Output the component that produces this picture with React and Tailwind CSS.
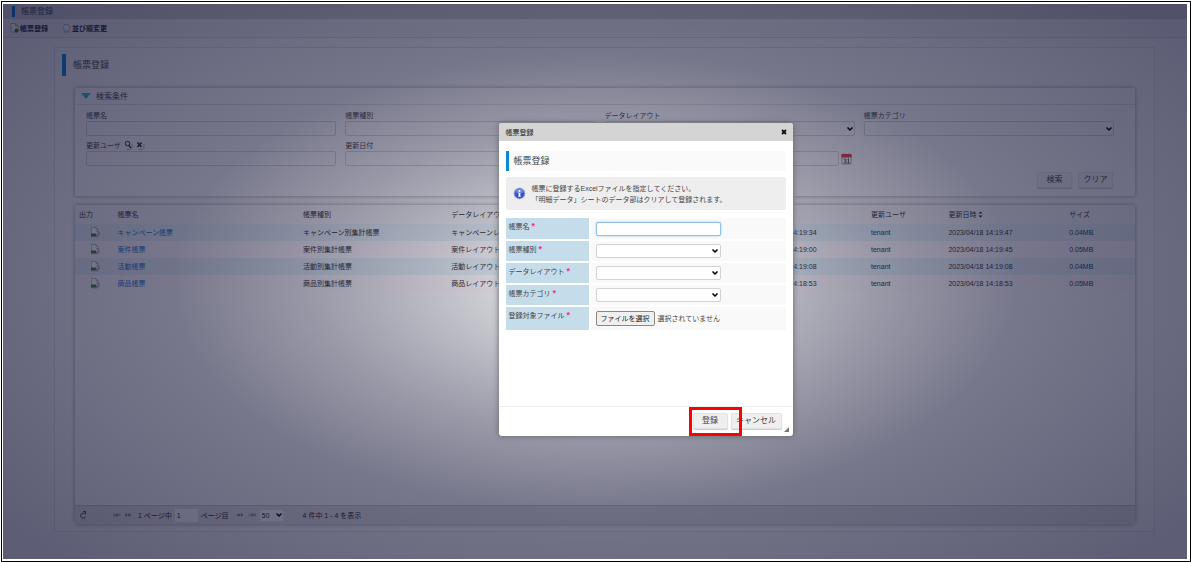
import React, { useState } from 'react';
import { ChevronDown } from 'lucide-react';

const ROWS = [
  { name: 'キャンペーン帳票', type: 'キャンペーン別集計帳票', layout: 'キャンペーンレイアウト', created: '2023/04/18 14:19:34', updated: '2023/04/18 14:19:47', size: '0.04MB' },
  { name: '案件帳票',         type: '案件別集計帳票',         layout: '案件レイアウト',         created: '2023/04/18 14:19:00', updated: '2023/04/18 14:19:45', size: '0.05MB' },
  { name: '活動帳票',         type: '活動別集計帳票',         layout: '活動レイアウト',         created: '2023/04/18 14:19:08', updated: '2023/04/18 14:19:08', size: '0.04MB' },
  { name: '商品帳票',         type: '商品別集計帳票',         layout: '商品レイアウト',         created: '2023/04/18 14:18:53', updated: '2023/04/18 14:18:53', size: '0.05MB' },
];

const DIALOG_SELECTS = [
  { id: 'reg-type',     label: '帳票種別' },
  { id: 'reg-layout',   label: 'データレイアウト' },
  { id: 'reg-category', label: '帳票カテゴリ' },
];

// ── Small drawings ───────────────────────────────────────────────────────────
function AddFileIcon() {
  return (
    <svg className="w-[9px] h-[10px] shrink-0" viewBox="0 0 18 20" fill="none">
      <path d="M2 1h9l5 5v12H2z" fill="#fff" stroke="#999" strokeWidth="1.5" />
      <path d="M11 1v5h5" stroke="#999" strokeWidth="1.5" />
      <circle cx="13" cy="15" r="4" fill="#0f8a24" />
    </svg>
  );
}

function SortIcon() {
  return (
    <svg className="w-[9px] h-[10px] shrink-0" viewBox="0 0 18 20" fill="none" stroke="#a5a5a5" strokeWidth="1.5">
      <path d="M5 3h8l3 7-3 6H5l-3-6z" fill="#f4f4f4" />
      <path d="M4 18h13" stroke="#999" />
    </svg>
  );
}

function ExportIcon() {
  return (
    <svg className="w-[10px] h-[11px]" viewBox="0 0 20 22" fill="none">
      <path d="M3 1h9l4 4v15H3z" fill="#fff" stroke="#aaa" strokeWidth="1.4" />
      <path d="M12 1v4h4" stroke="#999" strokeWidth="1.4" />
      <path d="M2 13h11v6H2z" fill="#3d7a38" />
      <path d="M13 9c5 0 6 3 5 7l-5 3" stroke="#888" strokeWidth="1.6" />
    </svg>
  );
}

function CalendarIcon() {
  return (
    <svg className="w-[11px] h-[12px]" viewBox="0 0 22 24">
      <rect x="2" y="3" width="18" height="19" fill="#fff" stroke="#888" strokeWidth="1.5" />
      <rect x="1" y="2" width="20" height="7" fill="#e8323a" />
      <path d="M6 0v4M16 0v4" stroke="#999" strokeWidth="2" />
      <path d="M5 12h5v8H5M6 16h4M15 11v9M13 13l2-1M12 20h6" fill="none" stroke="#555" strokeWidth="1.8" />
    </svg>
  );
}

function InfoIcon() {
  return (
    <svg className="w-[13px] h-[13px] shrink-0" viewBox="0 0 26 26">
      <circle cx="13" cy="13" r="12" fill="#b4bde0" />
      <circle cx="13" cy="13" r="10" fill="#3551c9" />
      <path d="M5 11a8 8 0 0 1 16 0q-8 3-16 0" fill="#6d84e0" />
      <circle cx="13" cy="8" r="2" fill="#fff" />
      <path d="M13 12v7" stroke="#fff" strokeWidth="3.5" fill="none" />
      <path d="M10.5 12h2M10.500 19h5" stroke="#fff" strokeWidth="1.2" />
    </svg>
  );
}

function SearchIcon() {
  return (
    <svg className="w-[9px] h-[10px]" viewBox="0 0 18 20" fill="none">
      <path d="M16 8v8l-3 3H5" stroke="#999" strokeWidth="1.4" />
      <circle cx="7" cy="7" r="4.5" stroke="#222" strokeWidth="2" />
      <path d="M10 11l4 5" stroke="#222" strokeWidth="2.5" />
    </svg>
  );
}

function ClearIcon() {
  return (
    <svg className="w-[9px] h-[10px]" viewBox="0 0 18 20" fill="none">
      <path d="M16 8v8l-3 3H5" stroke="#999" strokeWidth="1.4" />
      <path d="M3 5l8 9M11 5l-8 9" stroke="#222" strokeWidth="3" />
    </svg>
  );
}

// arrow with a bar in front (first) or doubled head (prev)
function PageArrow({ flip, bar }) {
  return (
    <svg className={`w-[8px] h-[6px] ${flip ? 'rotate-180' : ''}`} viewBox="0 0 16 12" fill="none" stroke="#777" strokeWidth="2">
      {bar ? <path d="M2 3v6M9 3L5 6l4 3M5 6h10" /> : <path d="M6 3L2 6l4 3M12 3L8 6l4 3M2 6h13" />}
    </svg>
  );
}

function Select({ id, dialog }) {
  return (
    <div className={`grid items-center ${dialog ? 'w-[125px]' : 'w-full'}`}>
      <select id={id} className={`col-start-1 row-start-1 w-full appearance-none rounded-xs border outline-none px-1 ${dialog ? 'h-[14px] border-[#d2d2d2] bg-white' : 'h-[15px] border-[#d2d2d6] bg-transparent'}`}>
        <option></option>
      </select>
      <ChevronDown className={`col-start-1 row-start-1 justify-self-end w-[8px] h-[8px] pointer-events-none text-black ${dialog ? 'mr-[2px]' : 'mr-[1px]'}`} strokeWidth={5} />
    </div>
  );
}

function TextField({ id, label, icons, calendar, ariaLabel }) {
  return (
    <div className="min-w-0">
      <div className="flex items-center gap-[2px] h-[12px]">
        {label && <label htmlFor={id}>{label}</label>}
        {icons}
      </div>
      <div className="flex items-center gap-[2px]">
        <input id={id} type="text" aria-label={ariaLabel} className="flex-1 min-w-0 h-[15px] px-1 rounded-xs border border-[#d2d2d6] outline-none" />
        {calendar && <button type="button" aria-label="カレンダー" className="w-[14px]"><CalendarIcon /></button>}
      </div>
    </div>
  );
}

function GrayButton({ children, wide, onClick }) {
  return (
    <button type="button" onClick={onClick}
      className={`${wide ? 'w-[51px]' : 'w-[35px]'} h-[16px] text-[8px] leading-[14px] rounded-xs border border-[#e2e2e2] bg-[#efefef] text-[#444] shadow-[0_1px_1px_#ccc]`}>
      {children}
    </button>
  );
}

function SearchPanel() {
  return (
    <section className="bg-[#f7f7f7] rounded-xs shadow-[0_0_4px_#999]">
      <h2 className="flex items-center gap-[5px] h-[17px] px-[6px] border-b border-[#dedede] text-[8px]">
        <svg className="w-[10px] h-[6px]" viewBox="0 0 10 6"><path d="M0 0h10L5 6z" fill="#2cb8cc" /></svg>
        検索条件
      </h2>
      <div className="grid grid-cols-4 gap-x-[9px] gap-y-[3px] pl-[11px] pr-[21px] pt-[4px]">
        <TextField id="s-name" label="帳票名" />
        <TextField id="s-type" label="帳票種別" />
        <div>
          <label htmlFor="s-layout" className="flex items-center h-[12px]">データレイアウト</label>
          <Select id="s-layout" />
        </div>
        <div>
          <label htmlFor="s-category" className="flex items-center h-[12px]">帳票カテゴリ</label>
          <Select id="s-category" />
        </div>
        <TextField id="s-user" label="更新ユーザ" icons={
          <>
            <button type="button" aria-label="検索" className="ml-[1px]"><SearchIcon /></button>
            <button type="button" aria-label="クリア" className="ml-[1px]"><ClearIcon /></button>
          </>
        } />
        <TextField id="s-from" label="更新日付" calendar />
        <TextField id="s-to" ariaLabel="更新日付 終了" calendar />
      </div>
      <div className="flex justify-end gap-[6px] pt-[6px] pr-[22px] pb-[8px]">
        <GrayButton>検索</GrayButton>
        <GrayButton>クリア</GrayButton>
      </div>
    </section>
  );
}

function ReportTable() {
  return (
    <table className="w-full table-fixed border-collapse text-left">
      <colgroup>
        <col className="w-[4%]" />
        <col className="w-[17.500%]" />
        <col className="w-[14%]" />
        <col className="w-[28.400%]" />
        <col className="w-[11.200%]" />
        <col className="w-[7.300%]" />
        <col className="w-[11.400%]" />
        <col />
      </colgroup>
      <thead>
        <tr className="h-[19px] bg-[#f1f1f1] text-[#333]">
          <th className="font-normal pl-[4px]">出力</th>
          <th className="font-normal">帳票名</th>
          <th className="font-normal">帳票種別</th>
          <th className="font-normal">データレイアウト</th>
          <th className="font-normal">登録日時</th>
          <th className="font-normal">更新ユーザ</th>
          <th className="font-normal">
            <span className="flex items-center gap-[2px]">
              更新日時
              <svg className="w-[5px] h-[7px]" viewBox="0 0 10 14"><path d="M1 5l4-4 4 4zM1 9h8l-4 4z" fill="#222" /></svg>
            </span>
          </th>
          <th className="font-normal">サイズ</th>
        </tr>
      </thead>
      <tbody>
        {ROWS.map(row => (
          <tr key={row.name} className="h-[17px] odd:bg-[#e2edf1] even:bg-[#f9f4f5] text-[#333] whitespace-nowrap">
            <td className="pl-[15px]"><ExportIcon /></td>
            <td><a href="#" className="text-[#1a73c8]">{row.name}</a></td>
            <td>{row.type}</td>
            <td>{row.layout}</td>
            <td>{row.created}</td>
            <td>tenant</td>
            <td>{row.updated}</td>
            <td>{row.size}</td>
          </tr>
        ))}
      </tbody>
    </table>
  );
}

function Pager() {
  return (
    <footer className="flex items-center h-[19px] px-[5px] bg-[#e0e0e0] border-t border-[#c8c8c8] text-[#222]">
      <button type="button" aria-label="再読込" className="w-[8px]">
        <svg className="w-[7px] h-[8px]" viewBox="0 0 14 16" fill="none" stroke="#333" strokeWidth="1.8"><path d="M10 6a5 5 0 1 0 1 5M6 1h5v5" /></svg>
      </button>
      <div className="flex items-center gap-[3px] ml-[25px]">
        <button type="button" aria-label="最初のページ"><PageArrow bar /></button>
        <button type="button" aria-label="前のページ"><PageArrow /></button>
      </div>
      <label htmlFor="page" className="ml-[6px]">1 ページ中</label>
      <input id="page" type="text" defaultValue="1" className="w-[23px] h-[13px] mx-[3px] px-[2px] bg-[#fafafa] outline-none" />
      <span>ページ目</span>
      <div className="flex items-center gap-[4px] ml-[7px]">
        <button type="button" aria-label="次のページ"><PageArrow flip /></button>
        <button type="button" aria-label="最後のページ"><PageArrow flip bar /></button>
      </div>
      <div className="grid items-center w-[23px] ml-[4px]">
        <select aria-label="表示件数" defaultValue="50" className="col-start-1 row-start-1 appearance-none h-[11px] px-[2px] bg-[#fafafa] outline-none">
          <option>50</option>
          <option>100</option>
        </select>
        <ChevronDown className="col-start-1 row-start-1 justify-self-end w-[8px] h-[8px] pointer-events-none text-black" strokeWidth={5} />
      </div>
      <span className="ml-[20px]">4 件中 1 - 4 を表示</span>
    </footer>
  );
}

function FormRow({ id, label, children }) {
  return (
    <tr className="h-[22px] border-b-2 border-white last:border-b-0">
      <th className="w-[84px] bg-[#c5dcea] font-normal text-left align-top pl-[3px] pt-[3px] border-r-2 border-white">
        <label htmlFor={id}>{label} <span className="font-bold text-[9px] leading-[9px] text-[#f0308c]">*</span></label>
      </th>
      <td className="bg-[#f9f9f9] pl-[5px]">{children}</td>
    </tr>
  );
}

function RegisterDialog({ onClose }) {
  const [fileName, setFileName] = useState('');

  return (
    <div role="dialog" aria-label="帳票登録" className="relative flex flex-col w-[294px] h-[313px] bg-white rounded-[3px] shadow-[0_0_6px_#666] overflow-hidden text-[#444]">
      <div className="flex items-center justify-between h-[18px] pl-[7px] pr-[6px] bg-[#d4d4d4] text-[#222]">
        <span>帳票登録</span>
        <button type="button" aria-label="閉じる" onClick={onClose}>
          <svg className="w-[6px] h-[6px]" viewBox="0 0 6 6"><path d="M1 1l4 4M5 1L1 5" stroke="#111" strokeWidth="1.8" /></svg>
        </button>
      </div>
      <div className="flex-1 px-[7px] pt-[10px]">
        <h2 className="h-[20px] pl-[5px] border-l-3 border-[#0d8bd0] bg-[#fafafa] text-[9px] leading-[20px]">帳票登録</h2>
        <div className="flex items-center gap-[6px] h-[33px] mt-[6px] px-[7px] rounded-xs bg-[#eeeeee]">
          <InfoIcon />
          <p>帳票に登録するExcelファイルを指定してください。<br />「明細データ」シートのデータ部はクリアして登録されます。</p>
        </div>
        <table className="w-full mt-[8px] border-collapse">
          <tbody>
            <FormRow id="reg-name" label="帳票名">
              <input id="reg-name" type="text" autoFocus className="block w-[125px] h-[14px] px-[2px] rounded-xs border border-[#8fc2ea] bg-white outline-none shadow-[0_0_2px_#8cc4f0]" />
            </FormRow>
            {DIALOG_SELECTS.map(f => (
              <FormRow key={f.id} id={f.id} label={f.label}>
                <Select id={f.id} dialog />
              </FormRow>
            ))}
            <FormRow id="reg-file" label="登録対象ファイル">
              <div className="flex items-center gap-[3px] h-[23px]">
                <input id="reg-file" type="file" className="sr-only" onChange={e => setFileName(e.target.files[0]?.name || '')} />
                <label htmlFor="reg-file" className="h-[15px] leading-[13px] px-[4px] border border-[#888] rounded-xs bg-[#efefef] text-[#222]">ファイルを選択</label>
                <span>{fileName || '選択されていません'}</span>
              </div>
            </FormRow>
          </tbody>
        </table>
      </div>
      <div className="flex justify-end gap-[3px] h-[30px] pt-[6px] pr-[11px] border-t border-[#ececec]">
        <GrayButton>登録</GrayButton>
        <GrayButton wide onClick={onClose}>キャンセル</GrayButton>
      </div>
      {/* highlight frame over the register button */}
      <div className="absolute right-[51px] bottom-0 w-[53px] h-[29px] border-3 border-[#ff0000] pointer-events-none" />
      <svg className="absolute right-[4px] bottom-[4px] w-[5px] h-[5px]" viewBox="0 0 5 5"><path d="M5 0v5H0z" fill="#777" /></svg>
    </div>
  );
}

export default function App() {
  const [open, setOpen] = useState(true);

  return (
    <div className="flex min-h-screen pl-px pt-px bg-white text-[7px] leading-[11px] text-[#444] font-['Liberation_Sans','Noto_Sans_CJK_JP',sans-serif]">
      <div className="flex flex-1 border border-black pl-px pt-[2px] pr-[3px] pb-[2px]">
        <div className="relative flex flex-col flex-1 min-w-0 bg-[#f2f2f2]">
          <header className="flex items-center h-[15px] px-[9px] bg-[#cccccc]">
            <h1 className="pl-[6px] border-l-3 border-[#0070c8] text-[8px]">帳票登録</h1>
          </header>
          <nav className="flex items-center gap-[14px] h-[19px] px-[7px] bg-[#ececec] border-b border-[#d8d8d8] font-bold text-[#222]">
            <button type="button" className="flex items-center gap-px"><AddFileIcon />帳票登録</button>
            <button type="button" className="flex items-center gap-px"><SortIcon />並び順変更</button>
          </nav>
          <main className="flex flex-col flex-1 pl-[51px] pt-[9px] pb-[27px] pr-[32px]">
            <div className="flex flex-col flex-1 pl-[20px] pr-[19px] pt-[6px] pb-[7px] border border-[#dedede] bg-[#f5f5f5]">
              <h2 className="self-start -ml-[13px] h-[22px] leading-[22px] pl-[7px] border-l-4 border-[#0088d4] text-[9px]">帳票登録</h2>
              <div className="mt-[12px]"><SearchPanel /></div>
              <section className="flex flex-col flex-1 mt-[9px] bg-[#f7f7f7] rounded-xs shadow-[0_0_4px_#999]">
                <div className="flex-1"><ReportTable /></div>
                <Pager />
              </section>
            </div>
          </main>

          {open && (
            <div className="absolute inset-0 flex justify-center items-start pl-[101px] pt-[119px] bg-[radial-gradient(ellipse_740px_400px_at_50%_50%,rgba(20,20,56,0.04)_0%,rgba(20,20,56,0.24)_20%,rgba(20,20,56,0.41)_38%,rgba(20,20,56,0.56)_57%,rgba(20,20,56,0.62)_78%,rgba(20,20,56,0.67)_100%)]">
              <RegisterDialog onClose={() => setOpen(false)} />
            </div>
          )}
        </div>
      </div>
    </div>
  );
}
